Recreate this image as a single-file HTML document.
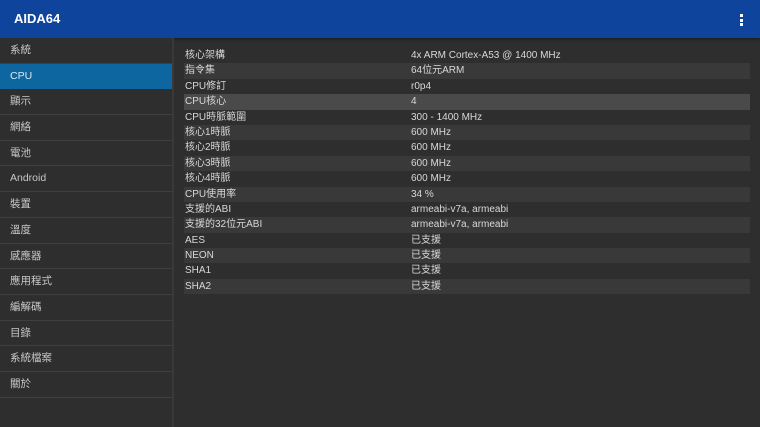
<!DOCTYPE html>
<html><head><meta charset="utf-8"><style>
*{margin:0;padding:0;box-sizing:border-box}
body{width:760px;height:427px;background:#2e2e2e;font-family:"Liberation Sans","Noto Sans CJK TC",sans-serif;overflow:hidden;position:relative}
.top{position:absolute;left:0;top:0;width:760px;height:38px;background:#0e449b;box-shadow:0 1px 3px rgba(0,0,0,.5)}
.top .t{position:absolute;left:14px;top:11px;color:#fff;font-weight:bold;font-size:13px}
.dots{position:absolute;left:740px;top:14px;width:3px}
.dots i{display:block;width:3px;height:3px;background:#fff;margin-bottom:1.5px}
.side{position:absolute;left:0;top:38px;width:174px;height:389px;background:#2e2e2e;border-right:2px solid #393939}
.it{height:25.7px;border-bottom:1px solid #3f3f3f;color:#c8c8c8;font-size:10.5px;line-height:25px;padding-left:10px}
.it.sel{background:#0d66a0;color:#e0e8f0;border-bottom-color:#0d66a0}
.rows{position:absolute;left:184px;top:48px;width:566px}
.r{height:15.4px;font-size:10px;color:#d8d8d8;line-height:15.4px;position:relative;padding-left:1px}
.r:nth-child(even){background:#393939}
.r.h{background:#4a4a4a!important}
.r span{position:absolute;left:227px;top:0}
</style></head><body>
<div class="top"><div class="t">AIDA64</div><div class="dots"><i></i><i></i><i></i></div></div>
<div class="side">
<div class="it">系統</div><div class="it sel">CPU</div><div class="it">顯示</div><div class="it">網絡</div><div class="it">電池</div><div class="it">Android</div><div class="it">裝置</div><div class="it">溫度</div><div class="it">感應器</div><div class="it">應用程式</div><div class="it">編解碼</div><div class="it">目錄</div><div class="it">系統檔案</div><div class="it">關於</div>
</div>
<div class="rows">
<div class="r">核心架構<span>4x ARM Cortex-A53 @ 1400 MHz</span></div>
<div class="r">指令集<span>64位元ARM</span></div>
<div class="r">CPU修訂<span>r0p4</span></div>
<div class="r h">CPU核心<span>4</span></div>
<div class="r">CPU時脈範圍<span>300 - 1400 MHz</span></div>
<div class="r">核心1時脈<span>600 MHz</span></div>
<div class="r">核心2時脈<span>600 MHz</span></div>
<div class="r">核心3時脈<span>600 MHz</span></div>
<div class="r">核心4時脈<span>600 MHz</span></div>
<div class="r">CPU使用率<span>34 %</span></div>
<div class="r">支援的ABI<span>armeabi-v7a, armeabi</span></div>
<div class="r">支援的32位元ABI<span>armeabi-v7a, armeabi</span></div>
<div class="r">AES<span>已支援</span></div>
<div class="r">NEON<span>已支援</span></div>
<div class="r">SHA1<span>已支援</span></div>
<div class="r">SHA2<span>已支援</span></div>
</div>
</body></html>
